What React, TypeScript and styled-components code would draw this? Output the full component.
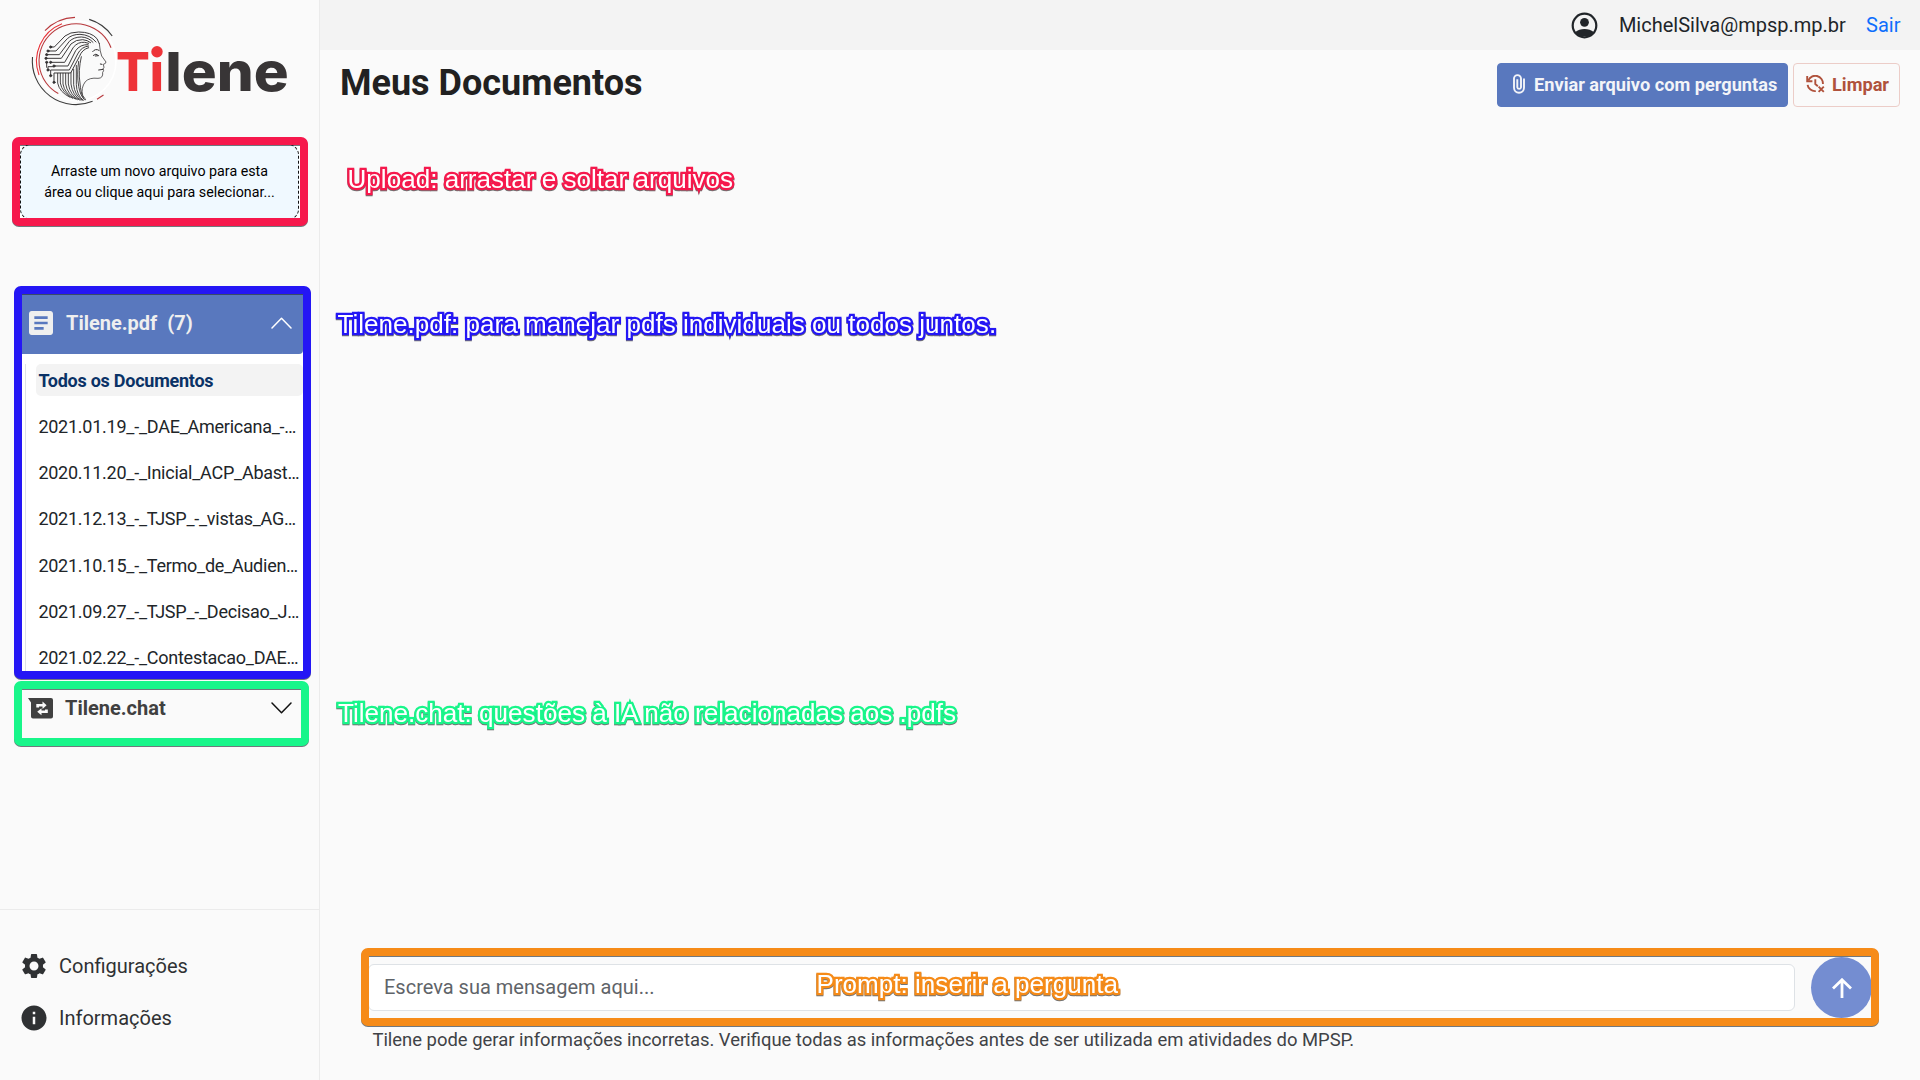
import React from 'react';
import styled, { createGlobalStyle } from 'styled-components';
import { MdArticle, MdSettings, MdInfo } from 'react-icons/md';

const GlobalStyle = createGlobalStyle`
  *, *::before, *::after { box-sizing: border-box; }
  body {
    margin: 0;
    background: #fafafa;
    color: #212529;
    font-family: Roboto, "Liberation Sans", sans-serif;
  }
`;

const Page = styled.div`
  position: relative;
  display: flex;
  width: 1920px;
  height: 1080px;
  overflow: hidden;
  background: #fafafa;
`;

/* ---------- Sidebar ---------- */

const Sidebar = styled.aside`
  display: flex;
  flex-direction: column;
  width: 320px;
  flex: none;
  border-right: 1px solid #ebebeb;
`;

const LogoBox = styled.div`
  height: 144px;
  padding: 8px 0 0 24px;
`;

const LogoSvg = styled.svg`
  display: block;
  width: 272px;
  height: 104px;
`;

const LogoWord = styled.text`
  font-family: Inter, "Liberation Sans", sans-serif;
  font-weight: 800;
  font-size: 54px;
`;

const DropBacking = styled.div`
  width: 280px;
  margin-left: 20px;
  background: #fff;
`;

const DropZone = styled.div`
  display: flex;
  align-items: center;
  justify-content: center;
  width: 279px;
  height: 76px;
  border: 1px dashed #111;
  border-radius: 11px;
  background: #f0f9ff;
  color: #000;
  font-size: 14.25px;
  line-height: 21px;
  text-align: center;
`;

const Accordion = styled.section`
  width: 281px;
  height: 377px;
  margin: 74px 0 0 22px;
  overflow: hidden;
  background: #fff;
`;

const AccordionHeader = styled.header<{ $open?: boolean }>`
  display: flex;
  align-items: center;
  height: ${p => (p.$open ? '60px' : '38px')};
  padding: 0 11px ${p => (p.$open ? '2px 3px' : '0 6px')};
  border-radius: 0 0 4px 0;
  background: ${p => (p.$open ? '#5978be' : 'transparent')};
  color: ${p => (p.$open ? '#efefef' : '#404040')};
  font-size: 20px;
  font-weight: 700;
`;

const AccordionTitle = styled.span<{ $gap: number }>`
  margin-left: ${p => p.$gap}px;
`;

const Count = styled.span`
  margin-left: 10px;
`;

const Chevron = styled.svg`
  width: 21px;
  height: 12px;
  margin-left: auto;
  fill: none;
  stroke-width: 1.5;
  stroke-linecap: round;
  stroke-linejoin: round;
`;

const DocList = styled.ul`
  display: flex;
  flex-direction: column;
  gap: 14.17px;
  height: 320px;
  margin: 10px 0 0 3px;
  padding: 0 0 0 10px;
  border-left: 1px solid #dee2e6;
  list-style: none;
`;

const DocItem = styled.li<{ $active?: boolean }>`
  flex: none;
  height: 32px;
  padding: 0 0 0 2.4px;
  border-radius: 5px;
  background: ${p => (p.$active ? '#f3f3f3' : 'transparent')};
  color: ${p => (p.$active ? '#0a3266' : '#212529')};
  font-size: 18px;
  font-weight: ${p => (p.$active ? 700 : 400)};
  letter-spacing: -0.25px;
  line-height: 33px;
  white-space: nowrap;
`;

const ChatSection = styled.section`
  width: 281px;
  margin: 18px 0 0 22px;
`;

const SidebarFooter = styled.nav`
  display: flex;
  flex-direction: column;
  gap: 22px;
  height: 171px;
  margin-top: auto;
  padding: 41px 0 0 19px;
  border-top: 1px solid #ebebeb;
`;

const FooterLink = styled.a`
  display: flex;
  align-items: center;
  gap: 10px;
  height: 30px;
  color: #2f3133;
  font-size: 20px;
`;

/* ---------- Main column ---------- */

const Main = styled.main`
  display: flex;
  flex: 1;
  flex-direction: column;
`;

const TopBar = styled.header`
  display: flex;
  align-items: center;
  justify-content: flex-end;
  height: 50px;
  padding-right: 19.5px;
  background: #f3f3f3;
  font-size: 20px;
`;

const Email = styled.span`
  margin: 0 20.3px 0 21.2px;
`;

const SignOut = styled.a`
  color: #0d6efd;
`;

const TitleRow = styled.div`
  display: flex;
  align-items: center;
  height: 70px;
  padding: 0 20px;
`;

const Title = styled.h1`
  margin: -3px auto 0 0;
  color: #212121;
  font-size: 36px;
  font-weight: 700;
  line-height: 43px;
`;

const Button = styled.button<{ $primary?: boolean }>`
  display: flex;
  align-items: center;
  width: ${p => (p.$primary ? '291px' : '107px')};
  height: 44px;
  margin-left: 5px;
  padding: 0 0 2px ${p => (p.$primary ? '14px' : '12px')};
  gap: ${p => (p.$primary ? '8px' : '7px')};
  border: 1px solid ${p => (p.$primary ? '#5978be' : '#eccdc8')};
  border-radius: 4px;
  background: ${p => (p.$primary ? '#5978be' : '#fafafa')};
  color: ${p => (p.$primary ? '#f3f4f8' : '#b0523c')};
  font-family: inherit;
  font-size: 18.2px;
  font-weight: 700;
  white-space: nowrap;
`;

const Composer = styled.form`
  display: flex;
  align-items: center;
  gap: 16px;
  height: 61px;
  margin: auto 0 0 48px;
`;

const MessageInput = styled.input`
  width: 1427px;
  height: 47px;
  padding: 0 15px 1px;
  border: 1px solid #dee2e6;
  border-radius: 6px;
  background: #fff;
  font-family: inherit;
  font-size: 20px;
  &::placeholder { color: #5f6469; opacity: 1; }
`;

const SendButton = styled.button`
  display: flex;
  align-items: center;
  justify-content: center;
  width: 61px;
  height: 61px;
  padding: 0;
  border: 0;
  border-radius: 50%;
  background: #748dd1;
`;

const Disclaimer = styled.p`
  height: 62px;
  margin: 0;
  padding: 11px 0 0 52.4px;
  color: #3f4246;
  font-size: 18.43px;
  line-height: 22px;
`;

/* ---------- Tutorial annotations over the page ---------- */

type Area = { $x: number; $y: number; $w: number; $h: number; $color: string };

const Highlight = styled.div<Area>`
  position: absolute;
  left: ${p => p.$x}px;
  top: ${p => p.$y}px;
  width: ${p => p.$w}px;
  height: ${p => p.$h}px;
  border: 8px solid ${p => p.$color};
  border-radius: 7px;
  filter: drop-shadow(0 1px 0 rgba(40, 50, 60, 0.65));
  pointer-events: none;
`;

const Callout = styled.span<{ $x: number; $y: number; $color: string }>`
  position: absolute;
  left: ${p => p.$x}px;
  top: ${p => p.$y}px;
  color: #fff;
  font-family: "Liberation Sans", Arial, sans-serif;
  font-size: 26.08px;
  line-height: 30px;
  white-space: nowrap;
  -webkit-text-stroke: 4.6px ${p => p.$color};
  paint-order: stroke fill;
  stroke-linejoin: round;
  filter: drop-shadow(0 1px 0.5px rgba(0, 0, 0, 0.55));
  pointer-events: none;
`;

/* ---------- Drawings ---------- */

const circuits = [
  'M92 117H103L135 84Q150 72 176 72Q214 72 231 92L238 107',
  'M84 129H108L142 92Q156 79 180 79Q210 80 228 102',
  'M80 140H118L148 100Q162 87 184 87Q206 88 219 103',
  'M78 151H124L153 108Q168 94 188 95Q202 96 212 104',
  'M92 163H134L160 118Q174 101 194 103L206 106',
  'M102 174H144L167 128Q180 109 204 110',
  'M80 163V178M84 186V176H102',
  'M92 203V186H148L173 138Q184 116 206 114',
  'M102 223V195H152L178 146Q186 124 206 119',
];
const nodes = [[92, 117], [84, 129], [80, 140], [78, 151], [92, 163], [80, 163], [84, 186], [102, 174], [92, 203], [102, 223]];
const strands = [
  'M113 196V225Q118 252 150 268', 'M121 196V225Q126 254 158 271', 'M129 196V228Q134 258 166 273',
  'M137 196V228Q142 260 172 275', 'M145 196V228Q150 262 178 276', 'M153 194V228Q157 262 183 277',
  'M161 184V230Q164 262 187 277', 'M169 172V230Q170 262 190 277', 'M176 160Q170 200 176 235Q180 262 194 276',
  'M184 146Q174 190 180 225Q182 255 190 270',
];

const Logo = () => (
  <LogoSvg viewBox="24 8 272 104">
    <g fill="none" strokeWidth="1.1">
      <circle cx="76" cy="61" r="40" stroke="#fff" strokeWidth="1.6" />
      <path d="M32.5 57A43.6 43.6 0 0 0 92.6 101.3M89.2 19.4A43.6 43.6 0 0 1 112.2 36" stroke="#3c3c3c" />
      <path d="M45 30.7A43.6 43.6 0 0 1 75 17.4M97 99.3L103.5 95M58.3 93.6A37.2 37.2 0 1 1 111 47.8" stroke="#b8393d" />
      <path d="M39 75A40 40 0 0 1 62 23.8" stroke="#e8343a" />
    </g>
    <g transform="translate(20 8) scale(.33333)" fill="none" stroke="#353334" strokeWidth="2.9" strokeLinejoin="round" strokeLinecap="round">
      {circuits.map(d => <path key={d} d={d} />)}
      {strands.map(d => <path key={d} d={d} strokeWidth="2.7" />)}
      {nodes.map(([x, y]) => <circle key={`${x}-${y}`} cx={x} cy={y} r="3.2" fill="#353334" />)}
      <path d="M238 107Q240 132 245 144L258 162Q258 167 250 169L252 178L248 184L251 188L248 193Q250 211 234 211Q208 208 196 221Q182 240 188 262L197 275" strokeWidth="2.3" />
      <path d="M218 131Q226 120 237 127M220 142Q228 134 236 143L226 144M246 169L241 168M236 186L250 184" strokeWidth="3" />
    </g>
    <clipPath id="wordWithoutDot"><path d="M110 40H149V112H110ZM149 59.5H164V112H149ZM164 40H296V112H164Z" /></clipPath>
    <g clipPath="url(#wordWithoutDot)">
      <LogoWord x="115.9" y="91" fill="#ee3338">
        <tspan textLength="48" lengthAdjust="spacingAndGlyphs">Ti</tspan>
        <tspan x="165.3" fill="#383536" textLength="123.4" lengthAdjust="spacingAndGlyphs">lene</tspan>
      </LogoWord>
    </g>
    <circle cx="157" cy="51.7" r="5.7" fill="#ee3338" />
  </LogoSvg>
);

const UserIcon = () => (
  <svg width="27" height="27" viewBox="0 0 27 27">
    <circle cx="13.5" cy="13.5" r="11.8" fill="none" stroke="#212529" strokeWidth="2.2" />
    <circle cx="13.5" cy="10.3" r="4.4" fill="#212529" />
    <path d="M4.3 20Q8 17 13.5 17T22.7 20L19 24.2H8Z" fill="#212529" />
  </svg>
);

const PaperclipIcon = () => (
  <svg width="14" height="20" viewBox="0 0 14 20" fill="none" stroke="currentColor" strokeWidth="1.9">
    <path d="M12 4.5V13.8A5 5 0 0 1 2 13.8V4.6A3.5 3.5 0 0 1 9 4.6V13.4A1.9 1.9 0 0 1 5.3 13.4V5.2" />
  </svg>
);

const ChatSwapIcon = () => (
  <svg width="25" height="21" viewBox="0 0 25 21">
    <path d="M0 0H23A2 2 0 0 1 25 2V18.5A2 2 0 0 1 23 20.5H5A2 2 0 0 1 3 18.5V4.5Z" fill="#404040" />
    <path d="M8.3 9.6V6H14.5V3.6L18.6 7.3L14.5 11V8.6H11V9.6ZM19.8 11.4V15H13.5V17.3L9.2 13.8L13.5 10.2V12.4H17V11.4Z" fill="#fafafa" />
  </svg>
);

const ClearHistoryIcon = () => (
  <svg width="19" height="18" viewBox="0 0 19 18" fill="none" stroke="#b0523c" strokeWidth="1.9">
    <path d="M2.3 5.5A7.6 7.6 0 0 1 16.9 9M1.6 9.8A7.4 7.4 0 0 0 9.8 16.1M9.3 4.3V9L11.8 11.2" />
    <path d="M1.2 1V6.2H6.4" />
    <path d="M12.6 11.6L17.8 16.8M17.8 11.6L12.6 16.8" />
  </svg>
);

const ArrowUpIcon = () => (
  <svg width="20" height="20" viewBox="0 0 20 20" fill="none" stroke="#fff" strokeWidth="2.8">
    <path d="M10 20V2M1 10.6L10 1.8L19 10.6" />
  </svg>
);

const documents = [
  'Todos os Documentos',
  '2021.01.19_-_DAE_Americana_-…',
  '2020.11.20_-_Inicial_ACP_Abast…',
  '2021.12.13_-_TJSP_-_vistas_AG…',
  '2021.10.15_-_Termo_de_Audien…',
  '2021.09.27_-_TJSP_-_Decisao_J…',
  '2021.02.22_-_Contestacao_DAE…',
];

export default function App() {
  return (
    <>
      <GlobalStyle />
      <Page>
        <Sidebar>
          <LogoBox><Logo /></LogoBox>
          <DropBacking>
            <DropZone>Arraste um novo arquivo para esta<br />área ou clique aqui para selecionar...</DropZone>
          </DropBacking>
          <Accordion>
            <AccordionHeader $open>
              <MdArticle size={32} />
              <AccordionTitle $gap={9}>Tilene.pdf</AccordionTitle>
              <Count>(7)</Count>
              <Chevron viewBox="0 0 21 12" stroke="#fff"><path d="M1 11L10.5 1.2L20 11" /></Chevron>
            </AccordionHeader>
            <DocList>
              {documents.map((name, i) => <DocItem key={name} $active={i === 0}>{name}</DocItem>)}
            </DocList>
          </Accordion>
          <ChatSection>
            <AccordionHeader>
              <ChatSwapIcon />
              <AccordionTitle $gap={12}>Tilene.chat</AccordionTitle>
              <Chevron viewBox="0 0 21 12" stroke="#111"><path d="M1 1L10.5 10.8L20 1" /></Chevron>
            </AccordionHeader>
          </ChatSection>
          <SidebarFooter>
            <FooterLink><MdSettings size={30} />Configurações</FooterLink>
            <FooterLink><MdInfo size={30} />Informações</FooterLink>
          </SidebarFooter>
        </Sidebar>
        <Main>
          <TopBar>
            <UserIcon />
            <Email>MichelSilva@mpsp.mp.br</Email>
            <SignOut>Sair</SignOut>
          </TopBar>
          <TitleRow>
            <Title>Meus Documentos</Title>
            <Button $primary><PaperclipIcon />Enviar arquivo com perguntas</Button>
            <Button><ClearHistoryIcon />Limpar</Button>
          </TitleRow>
          <Composer>
            <MessageInput placeholder="Escreva sua mensagem aqui..." />
            <SendButton type="button"><ArrowUpIcon /></SendButton>
          </Composer>
          <Disclaimer>
            Tilene pode gerar informações incorretas. Verifique todas as informações antes de ser utilizada em atividades do MPSP.
          </Disclaimer>
        </Main>

        <Highlight $x={12} $y={137} $w={296} $h={89} $color="#f6184c" />
        <Highlight $x={14} $y={286} $w={297} $h={393} $color="#2416f5" />
        <Highlight $x={14} $y={681} $w={295} $h={65} $color="#18f68a" />
        <Highlight $x={361} $y={948} $w={1518} $h={78} $color="#f68b18" />
        <Callout $x={347.5} $y={164} $color="#f6184c">Upload: arrastar e soltar arquivos</Callout>
        <Callout $x={337.5} $y={309} $color="#2416f5">Tilene.pdf: para manejar pdfs individuais ou todos juntos.</Callout>
        <Callout $x={338} $y={698} $color="#18f68a">Tilene.chat: questões à IA não relacionadas aos .pdfs</Callout>
        <Callout $x={816.5} $y={969} $color="#f68b18">Prompt: inserir a pergunta</Callout>
      </Page>
    </>
  );
}
